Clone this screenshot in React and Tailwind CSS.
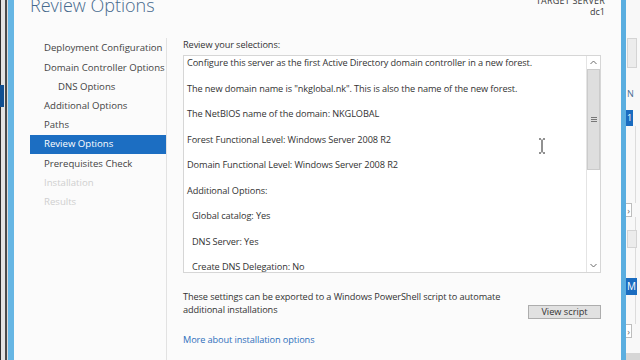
import React from "react";

const font = { fontFamily: '"Open Sans", "Noto Sans", sans-serif' };

function ChevUp() {
  return (
    <svg width="7" height="5" viewBox="0 0 7 5" className="block">
      <path d="M0.5 4 L3.5 1 L6.5 4" fill="none" stroke="#6b6b6b" strokeWidth="1" />
    </svg>
  );
}
function ChevDown() {
  return (
    <svg width="7" height="5" viewBox="0 0 7 5" className="block">
      <path d="M0.5 1 L3.5 4 L6.5 1" fill="none" stroke="#6b6b6b" strokeWidth="1" />
    </svg>
  );
}

function LeftStrip() {
  return (
    <div className="flex h-full w-[14px] shrink-0">
      <div className="flex w-[4px] flex-col">
        <div className="flex h-[85px]">
          <div className="w-[1px] bg-[#2e2e2e]" />
          <div className="w-[3px] bg-[#e2e2e2]" />
        </div>
        <div className="h-[22px] bg-[#104f91]" />
        <div className="flex flex-1">
          <div className="w-[1px] bg-[#2e2e2e]" />
          <div className="w-[3px] bg-[#e2e2e2]" />
        </div>
      </div>
      <div className="w-[1px] bg-[#e2e2e2]" />
      <div className="w-[2px] bg-[#4a4a4a]" />
      <div className="w-[1px] bg-[#dcdcdc]" />
      <div className="w-[6px] bg-[#66b6e4]" />
    </div>
  );
}

function RightBackdrop() {
  return (
    <div className="flex h-full w-[14px] shrink-0 flex-col bg-[#f8f8f8]">
      <div className="h-[38px]" />
      <div className="ml-[1px] h-[30px] w-[10px] border border-[#d4d4d4] bg-[#ececec]" />
      <div className="h-[21px]" />
      <div className="h-[10px] pl-[1px] text-[9px] leading-[10px] text-[#4a6e93]">N</div>
      <div className="h-[11px]" />
      <div className="h-[16px] w-[7px] bg-[#1a6cc0] pl-[1px] text-[9px] leading-[16px] text-white">1</div>
      <div className="h-[77px] ml-[9px] border-l border-[#dcdcdc]" />
      <div className="flex h-[14px] w-[6px] items-center justify-center border border-l-0 border-[#bdbdbd] bg-white text-[9px] leading-none text-[#666]">›</div>
      <div className="h-[13px] ml-[9px] border-l border-[#dcdcdc]" />
      <div className="ml-[1px] h-[18px] w-[10px] border border-[#d4d4d4] bg-[#ececec]" />
      <div className="h-[30px] ml-[9px] border-l border-[#dcdcdc]" />
      <div className="h-[17px] w-[11px] bg-[#1a6cc0] pl-[1px] text-[10px] leading-[17px] text-white">M</div>
      <div className="h-[29px] ml-[9px] border-l border-[#dcdcdc]" />
      <div className="flex h-[14px] w-[6px] items-center justify-center border border-l-0 border-[#bdbdbd] bg-white text-[9px] leading-none text-[#666]">›</div>
      <div className="flex-1" />
      <div className="h-[7px] bg-[#d6d6d6]" />
    </div>
  );
}

const navItems = [
  { label: "Deployment Configuration" },
  { label: "Domain Controller Options" },
  { label: "DNS Options", indent: true },
  { label: "Additional Options" },
  { label: "Paths" },
  { label: "Review Options", active: true },
  { label: "Prerequisites Check" },
  { label: "Installation", disabled: true },
  { label: "Results", disabled: true },
];

const lines = [
  { t: "Configure this server as the first Active Directory domain controller in a new forest." },
  { t: 'The new domain name is "nkglobal.nk". This is also the name of the new forest.' },
  { t: "The NetBIOS name of the domain: NKGLOBAL" },
  { t: "Forest Functional Level: Windows Server 2008 R2" },
  { t: "Domain Functional Level: Windows Server 2008 R2" },
  { t: "Additional Options:" },
  { t: "Global catalog: Yes", indent: true },
  { t: "DNS Server: Yes", indent: true },
  { t: "Create DNS Delegation: No", indent: true },
  { t: "Database folder: C:\\Windows\\NTDS", indent: true },
];

export default function App() {
  return (
    <div className="flex h-[360px] w-[640px] overflow-hidden bg-[#fbfbfb] text-[#2b2b2b]" style={font}>
      <LeftStrip />
      <main className="flex w-[607px] shrink-0 flex-col bg-[#fbfbfb]">
        <header className="flex h-[38px] justify-between px-[16px]">
          <h1 className="-mt-[7px] text-[18px] font-light leading-[24px] text-[#46698d]">Review Options</h1>
          <div className="-mt-[5px] text-right text-[9px] leading-[11px] text-[#3a3a3a]">
            <div className="tracking-[0.2px]">TARGET SERVER</div>
            <div>dc1</div>
          </div>
        </header>
        <div className="flex flex-1">
          <nav className="w-[153px] shrink-0 border-r border-[#e2e2e2] pl-[16px] pt-[1px]">
            {navItems.map((n) => (
              <div
                key={n.label}
                className={
                  "flex h-[19.2px] items-center text-[9.6px] whitespace-nowrap " +
                  (n.indent ? "pl-[28px] " : "pl-[14px] ") +
                  (n.active
                    ? "bg-[#1c6ec2] text-white"
                    : n.disabled
                    ? "text-[#cfcfcf]"
                    : "text-[#444444]")
                }
              >
                {n.label}
              </div>
            ))}
          </nav>
          <section className="flex flex-1 flex-col pl-[16px] pr-[20px]">
            <div className="text-[9.2px] leading-[14px] tracking-[-0.1px] text-[#333]">Review your selections:</div>
            <div className="relative mt-[3px] flex h-[218px] border border-[#d6d6d6] bg-white">
              <div className="flex flex-1 flex-col gap-[11.5px] overflow-hidden pl-[3px] text-[9.2px] leading-[14px] tracking-[-0.1px] text-[#333]">
                {lines.map((l) => (
                  <div key={l.t} className={"whitespace-nowrap " + (l.indent ? "pl-[5px]" : "")}>
                    {l.t}
                  </div>
                ))}
              </div>
              <div className="flex w-[14px] flex-col border-l border-[#e4e4e4] bg-white">
                <div className="flex h-[13px] items-center justify-center">
                  <ChevUp />
                </div>
                <div className="flex h-[101px] items-center justify-center border border-[#cbcbcb] bg-[#dedede]">
                  <div className="flex flex-col gap-[1px]">
                    <div className="h-[1px] w-[6px] bg-[#777]" />
                    <div className="h-[1px] w-[6px] bg-[#777]" />
                    <div className="h-[1px] w-[6px] bg-[#777]" />
                  </div>
                </div>
                <div className="flex-1" />
                <div className="flex h-[13px] items-center justify-center">
                  <ChevDown />
                </div>
              </div>
              <svg className="absolute left-[354px] top-[82px]" width="8" height="16" viewBox="0 0 8 16">
                <path d="M1 1 H3 M5 1 H7 M4 1.5 V14.5 M1 15 H3 M5 15 H7" stroke="#222" strokeWidth="1" fill="none" />
              </svg>
            </div>
            <div className="mt-[17px] flex h-[29px] justify-between">
              <div className="whitespace-nowrap pt-[1px] text-[9.2px] leading-[12.5px] tracking-[-0.1px] text-[#333]">
                These settings can be exported to a Windows PowerShell script to automate
                <br />
                additional installations
              </div>
              <div className="mt-[15px] flex h-[14px] w-[73px] shrink-0 items-center justify-center border border-[#adadad] bg-[#e1e1e1] text-[9.2px] leading-none text-[#333]">
                View script
              </div>
            </div>
            <div className="mt-[14px] text-[9.2px] leading-[14px] tracking-[-0.1px] text-[#2f70bb]">More about installation options</div>
          </section>
        </div>
      </main>
      <div className="w-[5px] shrink-0 bg-[#5aaee0]" />
      <RightBackdrop />
    </div>
  );
}
